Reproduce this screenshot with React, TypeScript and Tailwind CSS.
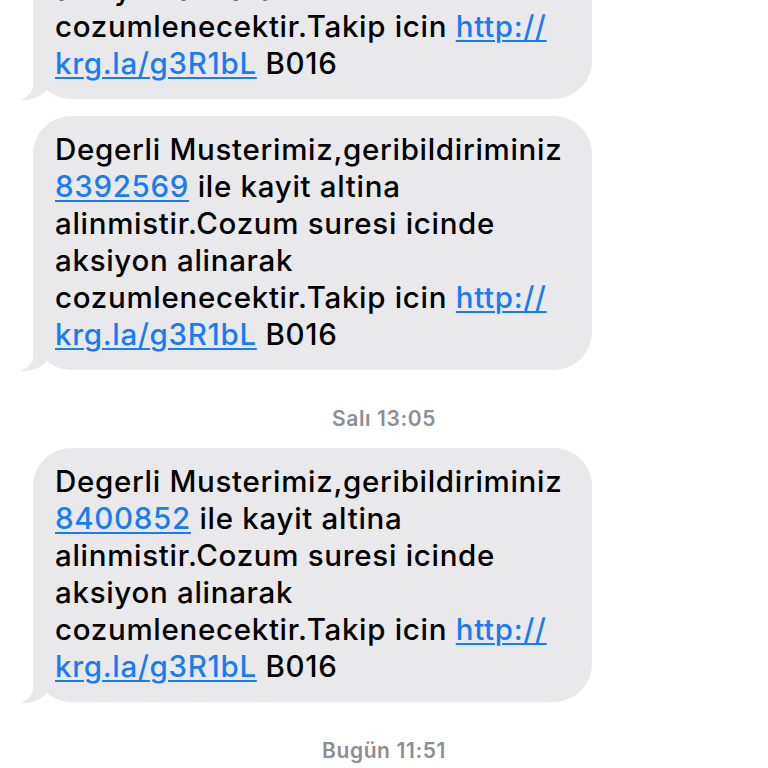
import React from 'react';

const Link: React.FC<{ children: React.ReactNode }> = ({ children }) => (
  <span className="text-[#1a7cf4] underline decoration-[2px] underline-offset-[3px]">{children}</span>
);

const Tail = () => (
  <svg
    className="absolute left-[-14px] bottom-[-2px]"
    width="40"
    height="46"
    viewBox="0 0 40 46"
  >
    <path d="M14 0 L14 30 C14 37 9 42 1 45 C10 46 19 43 26 37 L36 20 L14 0 Z" fill="#e9e9eb" />
  </svg>
);

const Bubble: React.FC<{ code: string }> = ({ code }) => (
  <div className="relative ml-[33px] w-[559px] rounded-[38px] bg-[#e9e9eb] px-[22px] pt-[15px] pb-[17px] text-[29.5px] leading-[37px] tracking-[0.7px] font-medium text-black whitespace-nowrap">
    <Tail />
    <div className="relative">Degerli Musterimiz,geribildiriminiz</div>
    <div className="relative">
      <Link>{code}</Link> ile kayit altina
    </div>
    <div className="relative">alinmistir.Cozum suresi icinde</div>
    <div className="relative">aksiyon alinarak</div>
    <div className="relative">
      cozumlenecektir.Takip icin <Link>http://</Link>
    </div>
    <div className="relative">
      <Link>krg.la/g3R1bL</Link> B016
    </div>
  </div>
);

const Stamp: React.FC<{ day: string; time: string }> = ({ day, time }) => (
  <div className="h-[24px] text-center text-[21px] leading-[24px] tracking-[0.6px] font-semibold text-[#8e8e93]">
    {day} {time}
  </div>
);

export default function App() {
  return (
    <div className="w-[768px] h-[768px] overflow-hidden bg-white font-['Inter',sans-serif]">
      <div className="mt-[-155px] flex flex-col">
        <Bubble code="8392569" />
        <div className="mt-[17px]">
          <Bubble code="8392569" />
        </div>
        <div className="mt-[37px]">
          <Stamp day="Salı" time="13:05" />
        </div>
        <div className="mt-[17px]">
          <Bubble code="8400852" />
        </div>
        <div className="mt-[37px]">
          <Stamp day="Bugün" time="11:51" />
        </div>
      </div>
    </div>
  );
}
